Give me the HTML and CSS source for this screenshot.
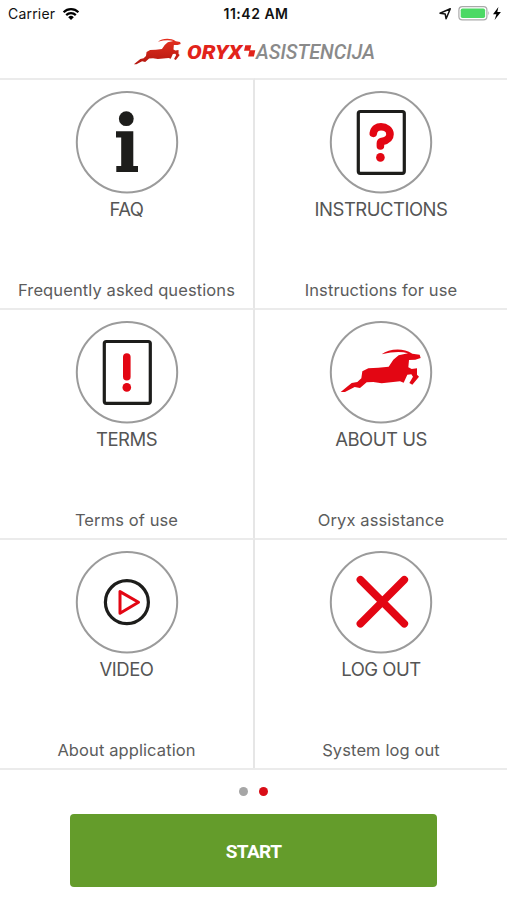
FILE: index.html
```
<!DOCTYPE html>
<html lang="en">
<head>
  <meta charset="UTF-8">
  <title>Oryx Asistencija</title>
  <link rel="stylesheet" href="styles.css">
</head>
<body>
  <div class="statusbar">
    <div class="status-left">
      <span class="carrier">Carrier</span>
      <svg class="wifi" width="18" height="14" viewBox="0 0 18 14">
        <path d="M1.6 5.2a10.5 10.5 0 0 1 14.8 0M4.2 8.1a6.8 6.8 0 0 1 9.6 0" fill="none" stroke="#000" stroke-width="2.2"/>
        <path d="M9 13L6.2 10.2a4 4 0 0 1 5.6 0z"/>
      </svg>
    </div>
    <span class="time">11:42 AM</span>
    <div class="status-right">
      <svg width="62" height="16" viewBox="0 0 62 16">
        <path d="M0 7.2L10.3 2.7 6.1 12.8 5.2 8z" fill="none" stroke="#111" stroke-width="1.5" stroke-linejoin="round"/>
        <rect x="18.9" y=".7" width="28" height="13.2" rx="3.4" fill="#fff" stroke="#aaa" stroke-width="1.2"/>
        <rect x="20.7" y="2.5" width="24.4" height="9.6" rx="1.8" fill="#4cd964"/>
        <path d="M48.4 5.1q1.8 2.2 0 4.4z" fill="#aaa"/>
        <path d="M58.4 1L53 8.3h3.4L54.6 14 60.9 6.1H57.3z"/>
      </svg>
    </div>
  </div>

  <header class="header">
    <svg class="logo" width="260" height="30" viewBox="0 0 260 30">
      <defs>
        <linearGradient id="fur" x1="0" y1="0" x2="0" y2="1">
          <stop offset="0" stop-color="#e5301f"/>
          <stop offset="1" stop-color="#b3170f"/>
        </linearGradient>
      </defs>
      <g transform="translate(-11.2 -19.5) scale(.195 .2)">
        <path fill="url(#fur)" d="M62 234L95 207 112 204 124 193 127 172 145 163 175 161 206 158 220 137 236 124 264 118Q235 108 185 121C206 105 248 100 277 119L299 122 302 132 286 137 267 138 265 160 275 165 291 163 291 182 297 188 277 212 268 207 279 188 274 181 262 182 251 206 240 202 185 208 160 204 140 205 120 222 104 219 75 234z"/>
      </g>
      <text class="logo-oryx" x="54" y="22" textLength="55" lengthAdjust="spacingAndGlyphs">ORYX</text>
      <path d="M112.3 8.2h6l-1.2 5h5.2l-1.4 6.4h-5.8l1.3-5.8h-5.4z" fill="#e2231a"/>
      <text class="logo-name" x="123" y="22" textLength="119" lengthAdjust="spacingAndGlyphs">ASISTENCIJA</text>
    </svg>
  </header>

  <main class="grid">
    <div class="cell">
      <svg class="icon" viewBox="0 0 104 104">
        <circle class="ring" cx="52" cy="52.2" r="50.2"/>
        <circle cx="51.3" cy="28.7" r="7.4" fill="#1d1d1b"/>
        <path d="M41 41.3H58.3V76H63V82H41.3V76H46.2V47.4H41z" fill="#1d1d1b"/>
      </svg>
      <h2>FAQ</h2>
      <p>Frequently asked questions</p>
    </div>
    <div class="cell">
      <svg class="icon" viewBox="0 0 104 104">
        <circle class="ring" cx="52" cy="52.2" r="50.2"/>
        <rect class="sheet" x="29.3" y="21.5" width="46" height="61.8" rx="2"/>
        <path class="mark" d="M44.3 43.3C45 38.6 48.3 36.8 52 36.8 57 36.8 61 39.8 61 44.2 61 48.5 57.5 50.5 53 51.5 51.6 51.9 51.4 52.5 51.4 53.5V56"/>
        <circle cx="51.4" cy="67.4" r="4.3" fill="#e30613"/>
      </svg>
      <h2>INSTRUCTIONS</h2>
      <p>Instructions for use</p>
    </div>
    <div class="cell">
      <svg class="icon" viewBox="0 0 104 104">
        <circle class="ring" cx="52" cy="52.2" r="50.2"/>
        <rect class="sheet" x="29.3" y="21.5" width="46" height="61.8" rx="2"/>
        <path class="mark" d="M51.8 37V56.7"/>
        <circle cx="51.8" cy="67.4" r="4.3" fill="#e30613"/>
      </svg>
      <h2>TERMS</h2>
      <p>Terms of use</p>
    </div>
    <div class="cell">
      <svg class="icon" viewBox="27 18 312 312">
        <circle class="ring big" cx="183" cy="174.6" r="150.6"/>
        <path fill="#e30613" d="M62 234L95 207 112 204 124 193 127 172 145 163 175 161 206 158 220 137 236 124 264 118Q235 108 185 121C206 105 248 100 277 119L299 122 302 132 286 137 267 138 265 160 275 165 291 163 291 182 297 188 277 212 268 207 279 188 274 181 262 182 251 206 240 202 185 208 160 204 140 205 120 222 104 219 75 234z"/>
      </svg>
      <h2>ABOUT US</h2>
      <p>Oryx assistance</p>
    </div>
    <div class="cell">
      <svg class="icon" viewBox="0 0 104 104">
        <circle class="ring" cx="52" cy="52.2" r="50.2"/>
        <circle class="sheet" cx="51.9" cy="52.2" r="21.5"/>
        <path d="M45 41.6V63.2L63.5 52.3z" fill="none" stroke="#e30613" stroke-width="3" stroke-linejoin="round"/>
      </svg>
      <h2>VIDEO</h2>
      <p>About application</p>
    </div>
    <div class="cell">
      <svg class="icon" viewBox="0 0 104 104">
        <circle class="ring" cx="52" cy="52.2" r="50.2"/>
        <path class="mark" d="M31.4 29.8L75.3 73.8M75.3 29.8L31.4 73.8"/>
      </svg>
      <h2>LOG OUT</h2>
      <p>System log out</p>
    </div>
  </main>

  <div class="dots">
    <span class="dot"></span>
    <span class="dot active"></span>
  </div>

  <button class="start">START</button>
</body>
</html>
```
FILE: styles.css
```
* {
  box-sizing: border-box;
}
body {
  margin: 0;
  width: 507px;
  height: 900px;
  overflow: hidden;
  background: #fff;
  font-family: Inter, "Liberation Sans", sans-serif;
  display: flex;
  flex-direction: column;
  align-items: center;
}
.statusbar {
  width: 100%;
  height: 27px;
  padding: 0 5px 0 8px;
  display: grid;
  grid-template-columns: 1fr auto 1fr;
  align-items: center;
  font-size: 14px;
  color: #111;
}
.status-left {
  display: flex;
  align-items: center;
  gap: 7px;
}
.carrier {
  letter-spacing: 0.2px;
}
.time {
  font-weight: 600;
  letter-spacing: 0.5px;
  padding-left: 2px;
}
.status-right {
  display: flex;
  justify-content: flex-end;
}
.status-right svg {
  overflow: visible;
}
.header {
  width: 100%;
  height: 51px;
  padding: 10px 0 0 133px;
}
.logo {
  display: block;
  overflow: visible;
}
.logo-oryx {
  font: italic 900 20px Roboto, sans-serif;
  fill: #e2231a;
}
.logo-name {
  font: italic 500 21px Roboto, sans-serif;
  fill: #8a8a8a;
}
.grid {
  width: 100%;
  display: grid;
  grid-template-columns: 255px 252px;
  grid-auto-rows: 230px;
  border-bottom: 2px solid #ebebeb;
}
.cell {
  display: flex;
  flex-direction: column;
  align-items: center;
  border-top: 2px solid #ebebeb;
  padding-top: 10.4px;
}
.cell:nth-child(odd) {
  border-right: 2px solid #e6e6e6;
}
.icon {
  width: 104px;
  height: 104px;
}
.ring {
  fill: none;
  stroke: #9b9b9b;
  stroke-width: 2;
}
.ring.big {
  stroke-width: 6;
}
.sheet {
  fill: none;
  stroke: #1d1d1b;
  stroke-width: 3.2;
}
.mark {
  fill: none;
  stroke: #e30613;
  stroke-width: 7.6;
  stroke-linecap: round;
  stroke-linejoin: round;
}
h2 {
  margin: 2.6px 0 0;
  font-size: 18.5px;
  line-height: 24px;
  font-weight: 400;
  letter-spacing: -0.5px;
  color: #555;
}
.cell p {
  margin: 57px 0 0;
  font-size: 16.5px;
  line-height: 24px;
  letter-spacing: 0.1px;
  color: #5c5c5c;
}
.dots {
  display: flex;
  gap: 11px;
  padding: 17.4px 0 18px;
}
.dot {
  width: 9px;
  height: 9px;
  border-radius: 50%;
  background: #a6a6a6;
}
.dot.active {
  background: #d90d17;
}
.start {
  width: 367px;
  height: 73px;
  padding-top: 3px;
  border: none;
  border-radius: 4px;
  background: #649c2b;
  color: #fff;
  font: 700 19px Roboto, sans-serif;
  letter-spacing: -0.6px;
}
```
